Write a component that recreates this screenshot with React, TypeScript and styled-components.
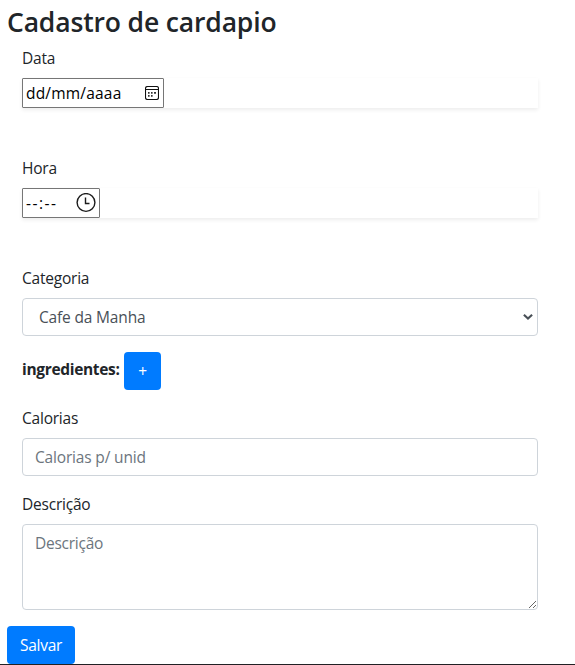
import React from "react";
import styled, { createGlobalStyle } from "styled-components";

const GlobalStyle = createGlobalStyle`
  *, *::before, *::after { box-sizing: border-box; }
  html, body { margin: 0; padding: 0; background: #fff; }
  body {
    font-family: "Open Sans", "Noto Sans", sans-serif;
    font-size: 15.5px;
    line-height: 24px;
    color: #212529;
    overflow: hidden;
  }
`;

const Page = styled.main`
  display: flex;
  flex-direction: column;
  height: 665px;
  padding: 4px 0 0 7px;
  border-bottom: 1px solid #212124;
`;

const Title = styled.h3`
  margin: 0 0 8px;
  height: 34px;
  font-size: 26.5px;
  font-weight: 600;
  line-height: 37px;
  white-space: nowrap;
  letter-spacing: -0.15px;
`;

const Fields = styled.div`
  display: flex;
  flex-direction: column;
  width: 516px;
  margin-left: 15px;
`;

const Group = styled.div<{ $gap?: number }>`
  display: flex;
  flex-direction: column;
  margin-bottom: ${(p) => p.$gap ?? 16}px;
`;

const Spaced = styled.span<{ $track?: number }>`
  letter-spacing: ${(p) => p.$track ?? 0}px;
`;

const Label = styled.label`
  height: 24px;
  margin-bottom: 8px;
  line-height: 25px;
  letter-spacing: -0.22px;
`;

const ShadowRow = styled.div`
  display: flex;
  height: 30px;
  box-shadow: 0 2px 4px rgba(0, 0, 0, 0.075);
`;

const PickerBox = styled.div<{ $width: number; $inset: number }>`
  display: flex;
  align-items: center;
  justify-content: space-between;
  width: ${(p) => p.$width}px;
  padding: 0 ${(p) => p.$inset}px 0 3px;
  border: 1px solid #767676;
  border-radius: 1px;
  background: #fff;
  color: #000;
  white-space: nowrap;
`;

const control = `
  width: 100%;
  border: 1px solid #ced4da;
  border-radius: 4px;
  background: #fff;
  color: #495057;
  font: inherit;
  outline: none;
  margin: 0;
  &::placeholder { color: #6c757d; opacity: 1; }
`;

const SelectFrame = styled.div`
  display: grid;
  align-items: center;
  > * { grid-area: 1 / 1; }
  > svg { justify-self: end; margin-right: 5px; pointer-events: none; }
`;

const Select = styled.select`
  ${control}
  height: 38px;
  padding: 0 16px 1px;
  appearance: none;
  letter-spacing: -0.17px;
`;

const Input = styled.input`
  ${control}
  height: 38px;
  padding: 5px 12px 6px;
  letter-spacing: -0.17px;
`;

const TextArea = styled.textarea`
  ${control}
  display: block;
  height: 86px;
  padding: 6px 12px;
  letter-spacing: -0.25px;
  resize: vertical;
`;

const IngredientRow = styled.div`
  display: flex;
  align-items: center;
  gap: 4px;
  height: 38px;
  margin-bottom: 16px;
`;

const Strong = styled.strong`
  width: 98px;
  padding-bottom: 4px;
  font-weight: 700;
  letter-spacing: -0.32px;
  white-space: nowrap;
`;

const Button = styled.button<{ $width: number }>`
  width: ${(p) => p.$width}px;
  height: 38px;
  flex: none;
  padding: 0;
  border: 0;
  border-radius: 4px;
  background: #007bff;
  color: #fff;
  font: inherit;
  letter-spacing: -0.25px;
  text-align: center;
`;

const CalendarIcon = () => (
  <svg width="14" height="14" viewBox="0 0 14 14" fill="none" stroke="#111">
    <rect x=".5" y=".5" width="13" height="13" rx="2" strokeWidth="1.1" />
    <path d="M1 3.5h12" />
    <path
      fill="#333"
      stroke="none"
      d="M3 6h1.6v1.7H3zM6 6h1.6v1.7H6zM9 6h2v1.7H9zM3 9h1.6v1.7H3zM6 9h1.6v1.7H6z"
    />
  </svg>
);

const ClockIcon = () => (
  <svg width="20" height="20" viewBox="0 0 20 20" fill="none" stroke="#1b1b1b">
    <circle cx="10" cy="9.5" r="8.9" strokeWidth="1.4" />
    <path d="M9.5 4.5v6h4" strokeWidth="1.4" />
  </svg>
);

const Chevron = () => (
  <svg width="10" height="8" viewBox="0 0 10 8" fill="none" stroke="#495057" strokeWidth="2.1">
    <path d="M.9 1.7 5 5.6l4.1-3.9" />
  </svg>
);

export default function App() {
  return (
    <>
      <GlobalStyle />
      <Page>
        <Title>Cadastro de cardapio</Title>
        <Fields>
          <Group $gap={48}>
            <Label>Data</Label>
            <ShadowRow>
              <PickerBox $width={142} $inset={4}>
                <Spaced $track={0.2}>dd/mm/aaaa</Spaced>
                <CalendarIcon />
              </PickerBox>
            </ShadowRow>
          </Group>
          <Group $gap={48}>
            <Label>Hora</Label>
            <ShadowRow>
              <PickerBox $width={78} $inset={3}>
                <Spaced $track={1.5}>--:--</Spaced>
                <ClockIcon />
              </PickerBox>
            </ShadowRow>
          </Group>
          <Group>
            <Label htmlFor="categoria">Categoria</Label>
            <SelectFrame>
              <Select id="categoria">
                <option>Cafe da Manha</option>
              </Select>
              <Chevron />
            </SelectFrame>
          </Group>
          <IngredientRow>
            <Strong>ingredientes:</Strong>
            <Button type="button" $width={37}>+</Button>
          </IngredientRow>
          <Group>
            <Label htmlFor="calorias">Calorias</Label>
            <Input id="calorias" placeholder="Calorias p/ unid" />
          </Group>
          <Group>
            <Label htmlFor="descricao">Descrição</Label>
            <TextArea id="descricao" placeholder="Descrição" />
          </Group>
        </Fields>
        <Button type="submit" $width={68}>Salvar</Button>
      </Page>
    </>
  );
}
